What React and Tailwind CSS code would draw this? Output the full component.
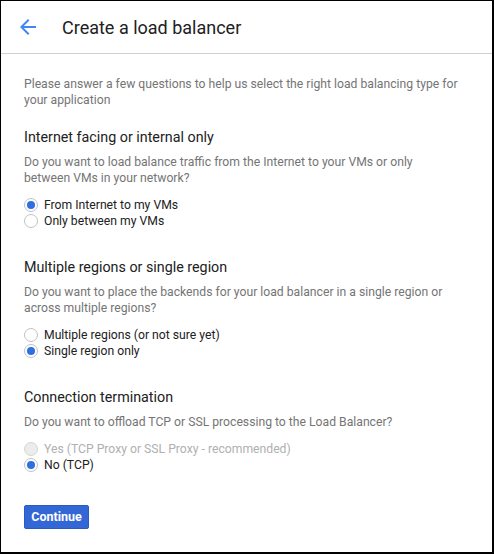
import React, { useState } from "react";

const Radio = ({ checked, disabled, label, onClick }) => (
  <label
    onClick={disabled ? undefined : onClick}
    className={`flex items-center h-4 text-[12.2px] leading-4 ${disabled ? "text-[#b0b0b0]" : "text-[#212121] cursor-pointer"}`}
  >
    <span
      className={`w-[14px] h-[14px] rounded-full border flex items-center justify-center mr-[6px] ${
        disabled ? "bg-[#ececec] border-[#d6d6d6]" : "bg-white border-[#c2c2c2]"
      }`}
    >
      {checked && <span className="w-[8px] h-[8px] rounded-full bg-[#2f6fe0]" />}
    </span>
    {label}
  </label>
);

const Section = ({ title, desc, first, children }) => (
  <div className={first ? "mt-[19px]" : "mt-[28px]"}>
    <h3 className="text-[14.3px] leading-5 text-[#212121]">{title}</h3>
    <p className="mt-[7px] text-[12.2px] leading-4 text-[#757575]">{desc}</p>
    <div className="mt-[11px]">{children}</div>
  </div>
);

export default function App() {
  const [traffic, setTraffic] = useState("internet");
  const [region, setRegion] = useState("single");
  const [term, setTerm] = useState("no");

  return (
    <div
      className="w-[494px] h-[554px] bg-white border border-black border-r-2 border-b-2 overflow-hidden"
      style={{ fontFamily: "Roboto, 'Liberation Sans', Arial, sans-serif" }}
    >
      {/* header */}
      <div className="h-[53px] border-b border-[#d0d0d0] flex items-center">
        <button className="ml-[15px] w-6 h-6 text-[#4285f4]">
          <svg viewBox="0 0 24 24" width="24" height="24" fill="currentColor">
            <path d="M20 11H7.83l5.59-5.59L12 4l-8 8 8 8 1.41-1.41L7.83 13H20v-2z" />
          </svg>
        </button>
        <h1 className="ml-[22px] text-[18px] text-[#212121]">Create a load balancer</h1>
      </div>

      <div className="pl-[23px] pr-[32px] pt-[22px]">
        <p className="text-[12.2px] leading-4 text-[#757575]">
          Please answer a few questions to help us select the right load balancing type for your application
        </p>

        <Section
          first
          title="Internet facing or internal only"
          desc="Do you want to load balance traffic from the Internet to your VMs or only between VMs in your network?"
        >
          <Radio checked={traffic === "internet"} label="From Internet to my VMs" onClick={() => setTraffic("internet")} />
          <Radio checked={traffic === "internal"} label="Only between my VMs" onClick={() => setTraffic("internal")} />
        </Section>

        <Section
          title="Multiple regions or single region"
          desc="Do you want to place the backends for your load balancer in a single region or across multiple regions?"
        >
          <Radio checked={region === "multi"} label="Multiple regions (or not sure yet)" onClick={() => setRegion("multi")} />
          <Radio checked={region === "single"} label="Single region only" onClick={() => setRegion("single")} />
        </Section>

        <Section
          title="Connection termination"
          desc="Do you want to offload TCP or SSL processing to the Load Balancer?"
        >
          <Radio disabled label="Yes (TCP Proxy or SSL Proxy - recommended)" />
          <Radio checked={term === "no"} label="No (TCP)" onClick={() => setTerm("no")} />
        </Section>

        <button className="mt-[32px] h-6 w-[65px] bg-[#3367d6] border border-[#2a5bc4] rounded-[2px] text-white text-[12.5px] font-bold">
          Continue
        </button>
      </div>
    </div>
  );
}
